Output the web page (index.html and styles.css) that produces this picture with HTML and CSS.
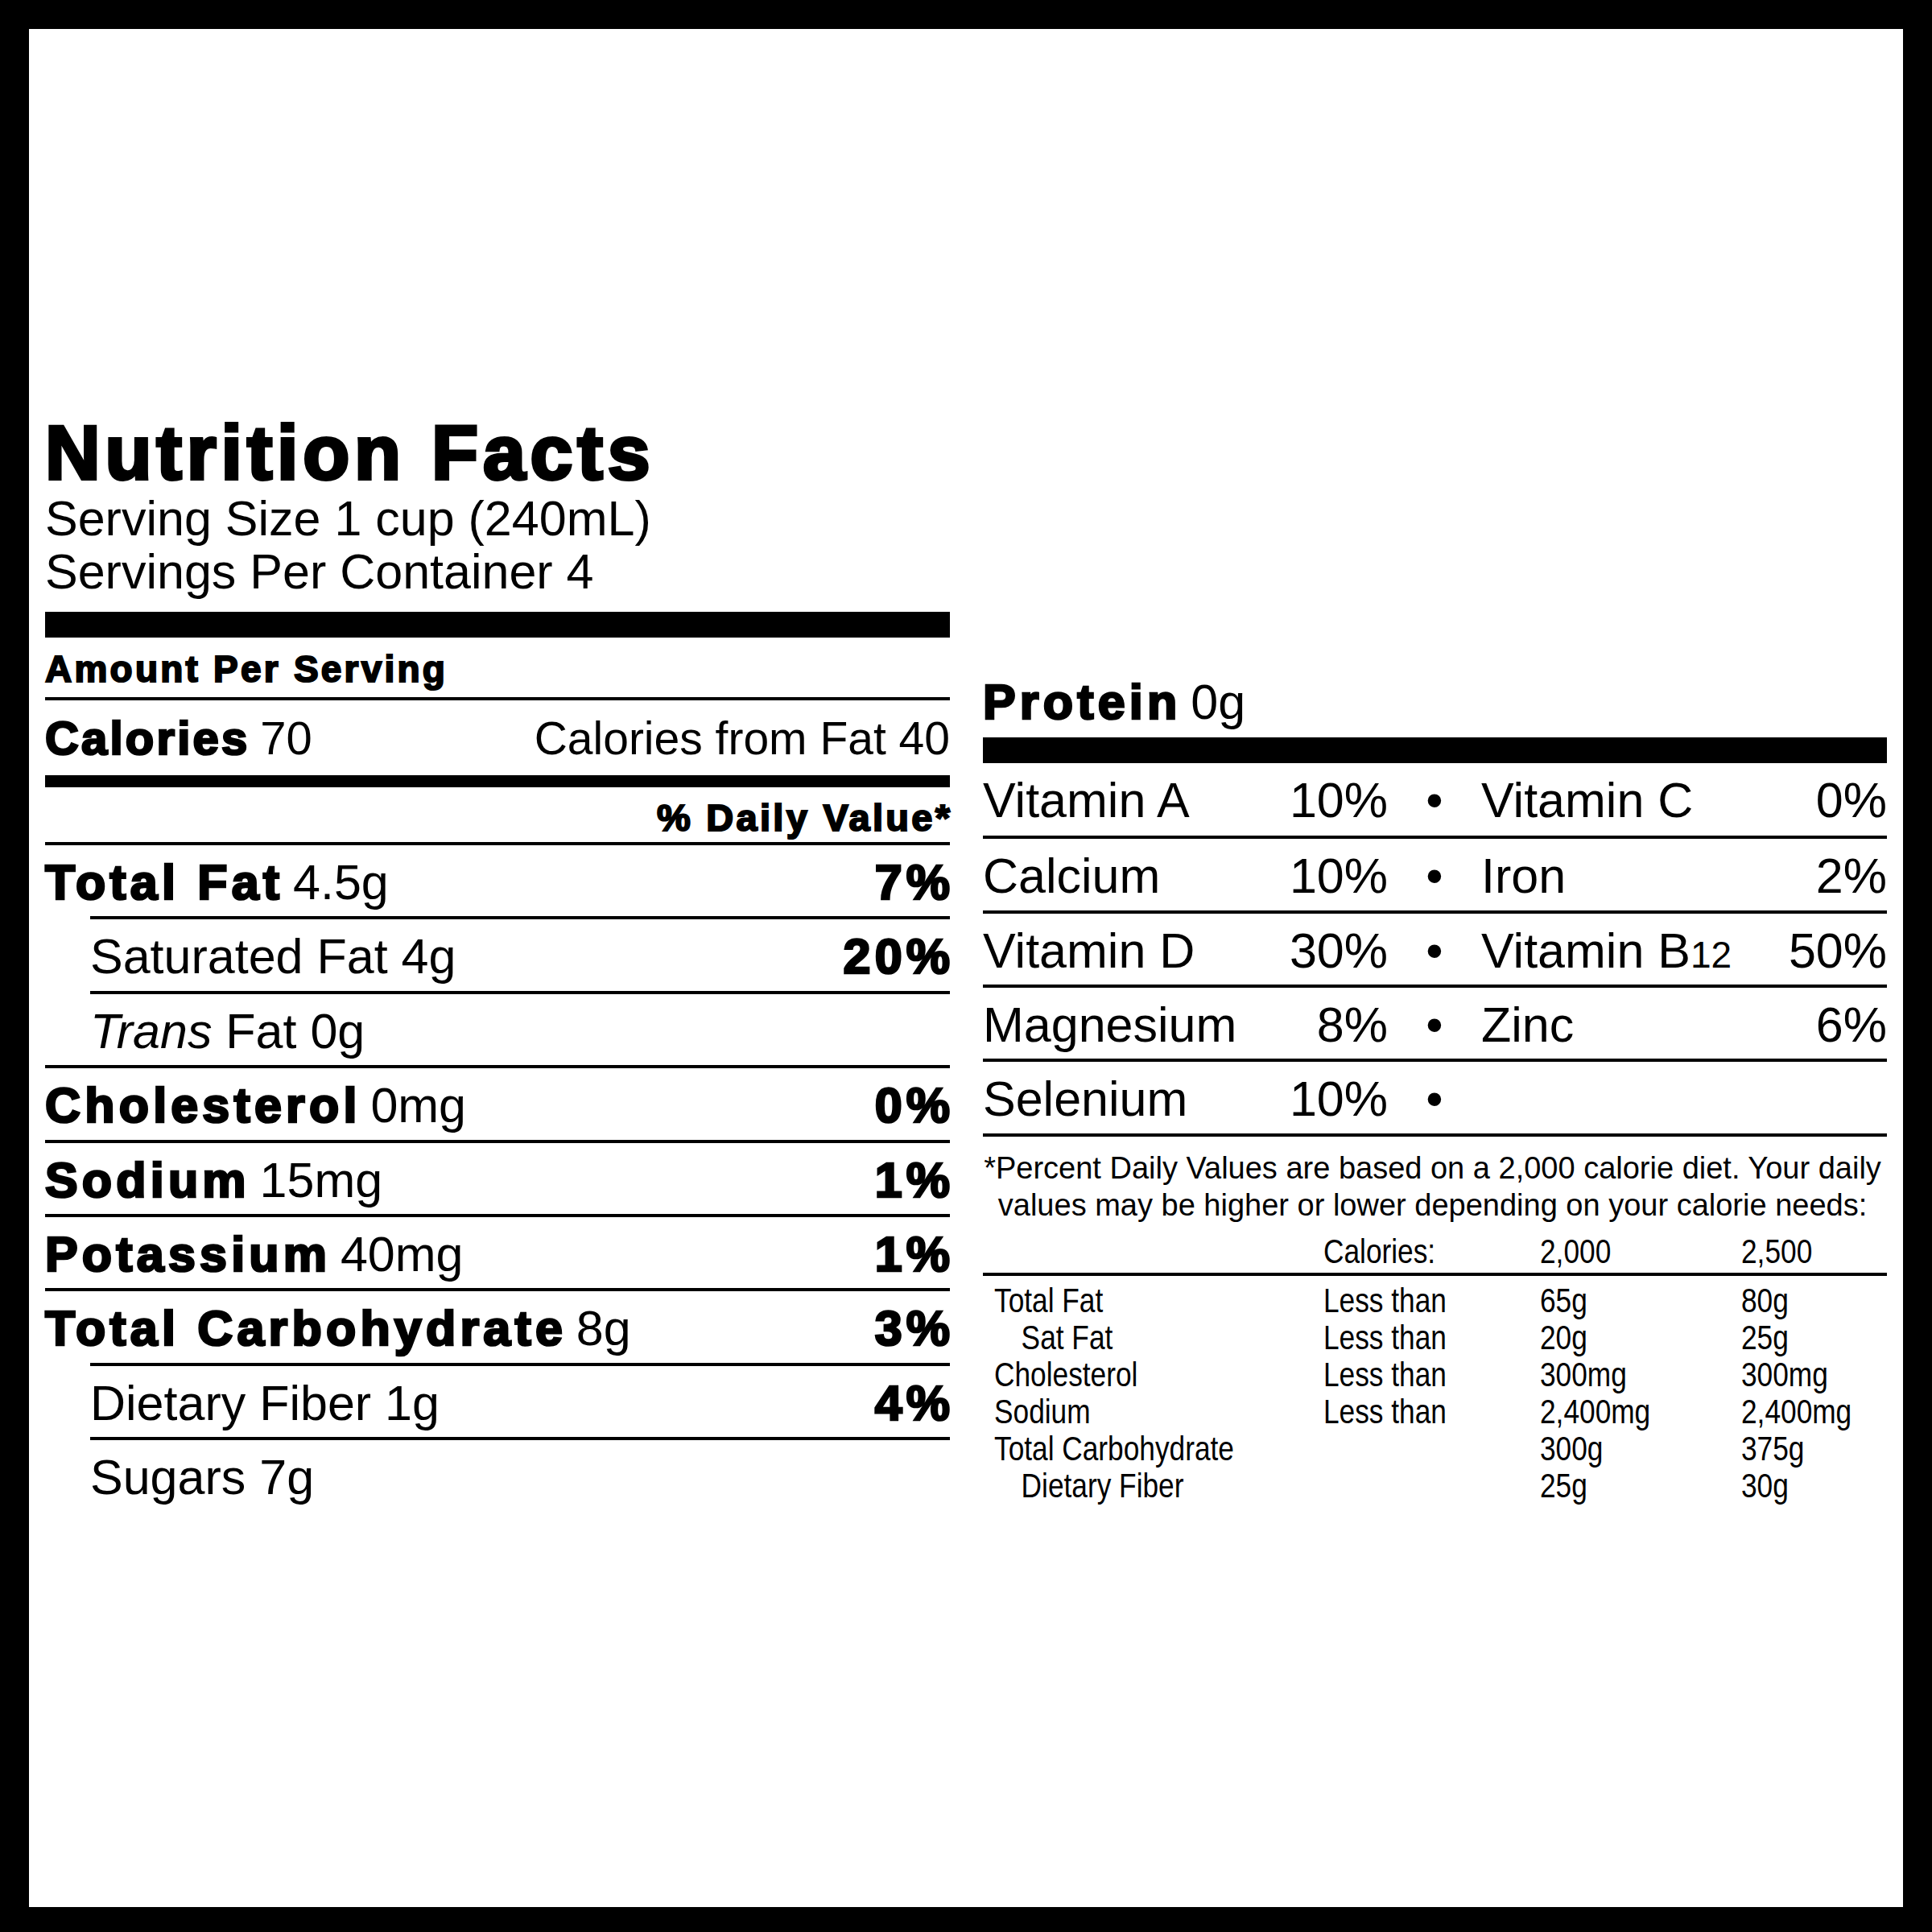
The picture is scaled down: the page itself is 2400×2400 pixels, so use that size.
FILE: index.html
```html
<!DOCTYPE html>
<html lang="en">
<head>
<meta charset="utf-8">
<title>Nutrition Facts</title>
<link rel="stylesheet" href="styles.css">
</head>
<body>
<div class="frame">
  <div class="label">
    <section class="col col-main">
      <h1 class="title">Nutrition Facts</h1>
      <p class="serving">Serving Size 1 cup (240mL)</p>
      <p class="serving">Servings Per Container 4</p>
      <div class="bar"></div>
      <div class="amount"><b>Amount Per Serving</b></div>
      <div class="calories"><span><b>Calories</b> 70</span><span class="cff">Calories from Fat 40</span></div>
      <div class="dv"><b>% Daily Value*</b></div>
      <div class="row"><span><b>Total Fat</b> 4.5g</span><b>7%</b></div>
      <div class="row sub"><span>Saturated Fat 4g</span><b>20%</b></div>
      <div class="row sub"><span><i>Trans</i> Fat 0g</span></div>
      <div class="row"><span><b>Cholesterol</b> 0mg</span><b>0%</b></div>
      <div class="row"><span><b>Sodium</b> 15mg</span><b>1%</b></div>
      <div class="row"><span><b>Potassium</b> 40mg</span><b>1%</b></div>
      <div class="row"><span><b>Total Carbohydrate</b> 8g</span><b>3%</b></div>
      <div class="row sub"><span>Dietary Fiber 1g</span><b>4%</b></div>
      <div class="row sub"><span>Sugars 7g</span></div>
    </section>
    <section class="col col-side">
      <div class="protein"><span><b>Protein</b> 0g</span></div>
      <div class="bar bar-side"></div>
      <div class="vrow vfirst"><span>Vitamin A</span><span class="pct">10%</span><span class="dot">•</span><span>Vitamin C</span><span class="pct">0%</span></div>
      <div class="vrow"><span>Calcium</span><span class="pct">10%</span><span class="dot">•</span><span>Iron</span><span class="pct">2%</span></div>
      <div class="vrow"><span>Vitamin D</span><span class="pct">30%</span><span class="dot">•</span><span>Vitamin B<small class="sm">12</small></span><span class="pct">50%</span></div>
      <div class="vrow"><span>Magnesium</span><span class="pct">8%</span><span class="dot">•</span><span>Zinc</span><span class="pct">6%</span></div>
      <div class="vrow vlast"><span>Selenium</span><span class="pct">10%</span><span class="dot">•</span><span></span><span></span></div>
      <p class="foot">*Percent Daily Values are based on a 2,000 calorie diet. Your daily<br>values may be higher or lower depending on your calorie needs:</p>
      <div class="dvtable">
        <div class="trow thead"><span></span><span>Calories:</span><span>2,000</span><span>2,500</span></div>
        <div class="tbody">
          <div class="trow"><span>Total Fat</span><span>Less than</span><span>65g</span><span>80g</span></div>
          <div class="trow"><span class="ind">Sat Fat</span><span>Less than</span><span>20g</span><span>25g</span></div>
          <div class="trow"><span>Cholesterol</span><span>Less than</span><span>300mg</span><span>300mg</span></div>
          <div class="trow"><span>Sodium</span><span>Less than</span><span>2,400mg</span><span>2,400mg</span></div>
          <div class="trow"><span>Total Carbohydrate</span><span></span><span>300g</span><span>375g</span></div>
          <div class="trow"><span class="ind">Dietary Fiber</span><span></span><span>25g</span><span>30g</span></div>
        </div>
      </div>
    </section>
  </div>
</div>
</body>
</html>
```

FILE: styles.css
```css
* {
  box-sizing: border-box;
  margin: 0;
  padding: 0;
}

body {
  margin: 0;
  background: #000;
}

.frame {
  width: 2400px;
  height: 2400px;
  border: 36px solid #000;
  border-bottom-width: 31px;
  background: #fff;
  color: #000;
  padding: 478px 20px 0 20px;
  font-family: "Liberation Sans", Arial, Helvetica, sans-serif;
}

.label {
  display: flex;
  align-items: flex-end;
  gap: 41px;
}

.col-main {
  width: 1124px;
}

.col-side {
  width: 1123px;
  padding-bottom: 10px;
}

b {
  font-weight: 700;
  letter-spacing: 0.085em;
  margin-right: -0.085em;
  -webkit-text-stroke: 0.045em #000;
}

i {
  font-style: italic;
}

.title {
  font-size: 95px;
  line-height: 97px;
  font-weight: 700;
  letter-spacing: 5.8px;
  -webkit-text-stroke: 4px #000;
  white-space: nowrap;
}

.serving {
  font-size: 61px;
  line-height: 66px;
  white-space: nowrap;
}

.bar {
  height: 32px;
  background: #000;
  margin-top: 17px;
}

.bar-side {
  margin-top: 0;
}

.amount {
  font-size: 46px;
  line-height: 60px;
  margin-top: 9px;
  padding-bottom: 5px;
  border-bottom: 4px solid #000;
}

.amount b,
.dv b {
  letter-spacing: 0.07em;
  margin-right: -0.07em;
}

.calories {
  display: flex;
  justify-content: space-between;
  align-items: baseline;
  height: 108px;
  font-size: 58px;
  line-height: 94px;
  border-bottom: 15px solid #000;
  white-space: nowrap;
}

.calories b {
  letter-spacing: 0.055em;
  margin-right: -0.055em;
}

.cff {
  font-size: 57px;
}

.dv {
  height: 68px;
  font-size: 47px;
  line-height: 76px;
  text-align: right;
}

.row {
  display: flex;
  justify-content: space-between;
  align-items: baseline;
  height: 92.4px;
  border-top: 4px solid #000;
  font-size: 61px;
  line-height: 92px;
  white-space: nowrap;
}

.row.sub {
  margin-left: 56px;
}

.protein {
  height: 90px;
  font-size: 61px;
  line-height: 92px;
  white-space: nowrap;
}

.vrow {
  display: grid;
  grid-template-columns: 380px 123px 116px 1fr auto;
  align-items: baseline;
  height: 92.3px;
  border-top: 4px solid #000;
  font-size: 61px;
  line-height: 92px;
  white-space: nowrap;
}

.vrow.vfirst {
  height: 90px;
  border-top: none;
}

.vrow.vlast {
  border-bottom: 4px solid #000;
  height: 96.3px;
}

.pct {
  text-align: right;
}

.dot {
  text-align: center;
}

.sm {
  font-size: 46px;
}

.foot {
  margin-top: 16px;
  padding-right: 6px;
  font-size: 38px;
  line-height: 46px;
  text-align: center;
  white-space: nowrap;
}

.dvtable {
  margin-top: 11px;
  font-size: 43px;
  line-height: 46px;
}

.trow {
  display: grid;
  grid-template-columns: 409px 269px 250px 1fr;
  padding-left: 14px;
  height: 46px;
  white-space: nowrap;
}

.trow > span {
  display: block;
  transform: scaleX(0.82);
  transform-origin: left center;
}

.trow.thead {
  height: 54px;
  padding-bottom: 4px;
  border-bottom: 4px solid #000;
}

.tbody {
  padding-top: 7px;
}

.trow > .ind {
  padding-left: 41px;
}
```
